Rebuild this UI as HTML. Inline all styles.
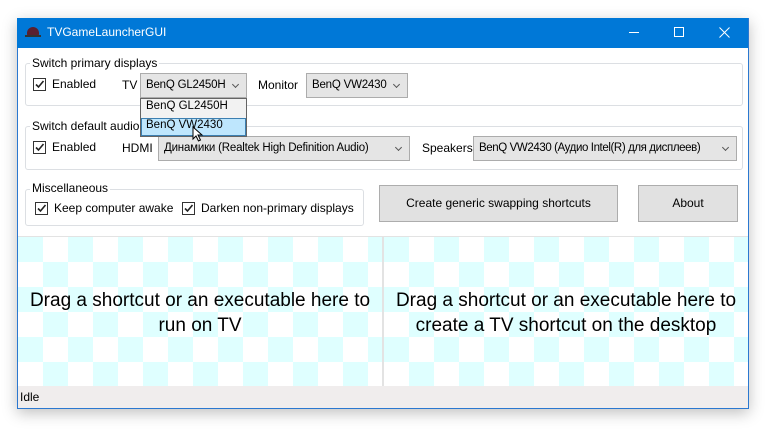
<!DOCTYPE html>
<html><head><style>
body{margin:0;width:769px;height:438px;background:#fff;position:relative;overflow:hidden;font-family:"Segoe UI","Liberation Sans","DejaVu Sans",sans-serif;font-size:12px;color:#000}
.a{position:absolute}
#win{left:17px;top:18px;width:730px;height:390px;border:1px solid #2b78d0;border-top:none;background:#fff;box-shadow:0 4px 14px rgba(0,0,0,.25)}
.title{left:17px;top:18px;width:731px;height:30px;background:#0078d7;color:#fff;font-size:12px}
.gb{border:1px solid #dcdfe3;border-radius:3px}
.lg{background:#fff;padding:0 2px;line-height:14px}
.cb{width:11px;height:11px;border:1px solid #333;background:#fff}
.cb svg{position:absolute;left:0;top:0}
.dd{background:#e5e5e5;border:1px solid #acacac;height:21px;line-height:20px;padding-left:5px;box-sizing:border-box;white-space:nowrap;overflow:hidden;font-size:11.5px;letter-spacing:-0.2px}
.dd:after{content:"";position:absolute;right:8px;top:8px;width:4px;height:4px;border-right:1px solid #555;border-bottom:1px solid #555;transform:rotate(45deg)}
.btn{background:#e1e1e1;border:1px solid #adadad;text-align:center;box-sizing:border-box}
.chk{background:conic-gradient(#fff 0 25%,#dfffff 0 50%,#fff 0 75%,#dfffff 0);background-size:50px 50px}
.big{font-size:19px;text-align:center;line-height:25px}
</style></head><body>
<div id="win" class="a"></div>
<div class="a title">
 <div class="a" style="left:10px;top:9px;width:12px;height:9px;border-radius:6px 6px 2px 2px;background:#5a2030"></div>
 <div class="a" style="left:8px;top:17px;width:16px;height:2px;background:#333"></div>
 <div class="a" style="left:30px;top:7px">TVGameLauncherGUI</div>
 <div class="a" style="left:612px;top:14px;width:10px;height:1px;background:#fff"></div>
 <div class="a" style="left:657px;top:9px;width:8px;height:8px;border:1px solid #fff"></div>
 <svg class="a" style="left:702px;top:9px" width="11" height="11"><path d="M0.5 0.5L10.5 10.5M10.5 0.5L0.5 10.5" stroke="#fff"/></svg>
</div>

<div class="a gb" style="left:25px;top:63px;width:716px;height:41px"></div>
<div class="a lg" style="left:30px;top:56px">Switch primary displays</div>
<div class="a cb" style="left:33px;top:78px"><svg width="11" height="11"><path d="M2 5.5L4.5 8L9.5 2" stroke="#222" stroke-width="1.6" fill="none"/></svg></div>
<div class="a" style="left:52px;top:77px">Enabled</div>
<div class="a" style="left:122px;top:78px">TV</div>
<div class="a dd" style="left:140px;top:73px;width:107px;height:25px;line-height:22px;padding-right:20px">BenQ GL2450H</div>
<div class="a" style="left:258px;top:78px">Monitor</div>
<div class="a dd" style="left:306px;top:73px;width:102px;height:25px;line-height:22px;padding-right:20px">BenQ VW2430</div>

<div class="a gb" style="left:25px;top:126px;width:716px;height:42px"></div>
<div class="a lg" style="left:30px;top:119px">Switch default audio</div>
<div class="a cb" style="left:33px;top:141px"><svg width="11" height="11"><path d="M2 5.5L4.5 8L9.5 2" stroke="#222" stroke-width="1.6" fill="none"/></svg></div>
<div class="a" style="left:52px;top:140px">Enabled</div>
<div class="a" style="left:122px;top:141px">HDMI</div>
<div class="a dd" style="left:158px;top:136px;width:252px;height:25px;line-height:22px;padding-right:20px">Динамики (Realtek High Definition Audio)</div>
<div class="a" style="left:422px;top:141px">Speakers</div>
<div class="a dd" style="left:473px;top:136px;width:264px;height:25px;line-height:22px;padding-right:20px;letter-spacing:-0.4px">BenQ VW2430 (Аудио Intel(R) для дисплеев)</div>

<div class="a" style="left:140px;top:98px;width:107px;height:39px;background:#f2f2f2;border:1px solid #646464;box-sizing:border-box"></div>
<div class="a" style="left:146px;top:100px;font-size:11.5px">BenQ GL2450H</div>
<div class="a" style="left:141px;top:118px;width:105px;height:18px;background:#bee6fd;border:1px solid #3c7fb1;box-sizing:border-box"></div>
<div class="a" style="left:146px;top:119px;font-size:11.5px">BenQ VW2430</div>
<svg class="a" style="left:192px;top:126px" width="12" height="17"><path d="M1 1L1 13L4 10L6.5 15L8.5 14L6 9L10 9Z" fill="#fff" stroke="#000"/></svg>

<div class="a gb" style="left:25px;top:189px;width:337px;height:35px"></div>
<div class="a lg" style="left:30px;top:181px">Miscellaneous</div>
<div class="a cb" style="left:35px;top:202px"><svg width="11" height="11"><path d="M2 5.5L4.5 8L9.5 2" stroke="#222" stroke-width="1.6" fill="none"/></svg></div>
<div class="a" style="left:54px;top:201px">Keep computer awake</div>
<div class="a cb" style="left:182px;top:202px"><svg width="11" height="11"><path d="M2 5.5L4.5 8L9.5 2" stroke="#222" stroke-width="1.6" fill="none"/></svg></div>
<div class="a" style="left:201px;top:201px">Darken non-primary displays</div>

<div class="a btn" style="left:379px;top:185px;width:239px;height:37px;line-height:35px">Create generic swapping shortcuts</div>
<div class="a btn" style="left:638px;top:185px;width:100px;height:37px;line-height:35px">About</div>

<div class="a" style="left:18px;top:236px;width:730px;height:1px;background:#e3e3e3"></div>
<div class="a chk" style="left:18px;top:237px;width:364px;height:149px"></div>
<div class="a" style="left:382px;top:237px;width:2px;height:149px;background:#e3e3e3"></div>
<div class="a chk" style="left:384px;top:237px;width:364px;height:149px"></div>
<div class="a big" style="left:18px;top:288px;width:364px">Drag a shortcut or an executable here to<br>run on TV</div>
<div class="a big" style="left:384px;top:288px;width:364px">Drag a shortcut or an executable here to<br>create a TV shortcut on the desktop</div>

<div class="a" style="left:18px;top:386px;width:730px;height:22px;background:#f0eded"></div>
<div class="a" style="left:20px;top:390px">Idle</div>
</body></html>
